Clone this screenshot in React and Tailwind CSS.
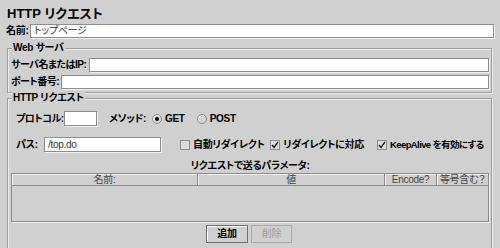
import React from "react";

/* ================= SMALL WIDGETS ================= */
const TextBox = ({ value = "", className = "" }) => (
  <div
    className={`h-full bg-white border border-[#8c8c8c] shadow-[1px_1px_0_#f2f2f2] flex items-center pl-[3px] font-normal text-[#333] ${className}`}
  >
    {value}
  </div>
);

const Radio = ({ checked, label }) => (
  <div className="flex items-center gap-[3px]">
    <span className="w-[10px] h-[10px] rounded-full border border-[#8c8c8c] bg-[#d6d6d6] shadow-[inset_1px_1px_0_#fff] flex items-center justify-center">
      {checked && <span className="w-[4px] h-[4px] rounded-full bg-black" />}
    </span>
    <span>{label}</span>
  </div>
);

const Check = ({ checked, label, className = "" }) => (
  <div className={`flex items-center gap-[3px] ${className}`}>
    <span className="w-[10px] h-[10px] shrink-0 border border-[#8c8c8c] bg-[#dcdcdc] flex items-center justify-center">
      {checked && (
        <svg width="8" height="8" viewBox="0 0 8 8">
          <path d="M1 4 L3 6.5 L7 1" fill="none" stroke="#111" strokeWidth="1.3" />
        </svg>
      )}
    </span>
    <span>{label}</span>
  </div>
);

const Group = ({ title, className = "", children }) => (
  <div
    className={`relative ml-[7px] mr-[8px] border border-[#9e9e9e] shadow-[1px_1px_0_#ececec,inset_1px_1px_0_#ececec] ${className}`}
  >
    <span className="absolute -top-[7px] left-[4px] px-[1px] bg-[#d0d0d0] leading-[12px]">
      {title}
    </span>
    {children}
  </div>
);

const Head = ({ children, className = "" }) => (
  <div
    className={`h-full flex items-center justify-center overflow-hidden border-r border-b border-[#8c8c8c] shadow-[inset_1px_1px_0_#f4f4f4] font-normal text-[#444] ${className}`}
  >
    {children}
  </div>
);

/* ================= COMPONENT ================= */
export default function App() {
  return (
    <div
      className="w-[500px] h-[248px] overflow-hidden whitespace-nowrap bg-[#d0d0d0] text-black text-[10px] leading-[12px] tracking-[-0.3px] font-bold [font-feature-settings:'palt']"
      style={{ fontFamily: '"Liberation Sans", "Noto Sans CJK JP", sans-serif' }}
    >
      {/* TITLE */}
      <div className="h-[24px] pl-[7px] pt-[6px] text-[13px] leading-[15px] tracking-normal">
        HTTP リクエスト
      </div>

      {/* NAME */}
      <div className="h-[14px] flex items-center pl-[6px] pr-[6px]">
        <span className="w-[24px] shrink-0">名前:</span>
        <TextBox value="トップページ" className="flex-1" />
      </div>

      {/* WEB SERVER */}
      <Group title="Web サーバ" className="mt-[10px] pt-[9px] pl-[3px] pr-[2px] pb-[3px]">
        <div className="h-[14px] flex items-center">
          <span className="w-[78px] shrink-0 tracking-[-0.5px]">サーバ名またはIP:</span>
          <TextBox className="flex-1" />
        </div>
        <div className="h-[14px] flex items-center mt-[3px]">
          <span className="w-[50px] shrink-0 tracking-[-0.5px]">ポート番号:</span>
          <TextBox className="flex-1" />
        </div>
      </Group>

      {/* HTTP REQUEST */}
      <Group title="HTTP リクエスト" className="mt-[5px] h-[170px] pt-[12px] pl-[3px] pr-[2px]">
        <div className="h-[15px] flex items-center pl-[5px]">
          <span className="w-[48px] shrink-0 tracking-[-0.5px]">プロトコル:</span>
          <TextBox className="w-[33px] shrink-0" />
          <span className="ml-[12px] w-[43px] shrink-0">メソッド:</span>
          <Radio checked label="GET" />
          <div className="ml-[12px]">
            <Radio label="POST" />
          </div>
        </div>

        <div className="h-[15px] flex items-center pl-[5px] mt-[11px]">
          <span className="w-[28px] shrink-0">パス:</span>
          <TextBox value="/top.do" className="w-[117px] shrink-0" />
          <Check label="自動リダイレクト" className="ml-[19px] w-[90px] shrink-0" />
          <Check checked label="リダイレクトに対応" className="w-[107px] shrink-0" />
          <Check checked label="KeepAlive を有効にする" className="text-[9.5px] tracking-[-0.6px]" />
        </div>

        <div className="text-center mt-[8px] h-[13px]">リクエストで送るパラメータ:</div>

        {/* PARAM TABLE */}
        <div className="h-[49px] border border-[#8c8c8c] shadow-[1px_1px_0_#f0f0f0] bg-[#d0d0d0]">
          <div className="h-[12px] flex">
            <Head className="w-[186px]">名前:</Head>
            <Head className="w-[187px]">値</Head>
            <Head className="w-[52px]">Encode?</Head>
            <Head className="flex-1 border-r-0">等号含む？</Head>
          </div>
        </div>

        {/* BUTTONS */}
        <div className="flex justify-center gap-[3px] mt-[3px] pr-[2px]">
          <button className="w-[42px] h-[18px] border border-[#6f6f6f] shadow-[inset_1px_1px_0_#fff] bg-[#d0d0d0] font-bold">
            追加
          </button>
          <button className="w-[41px] h-[18px] border border-[#a8a8a8] bg-[#d0d0d0] font-normal text-[#9a9a9a]">
            削除
          </button>
        </div>
      </Group>
    </div>
  );
}
